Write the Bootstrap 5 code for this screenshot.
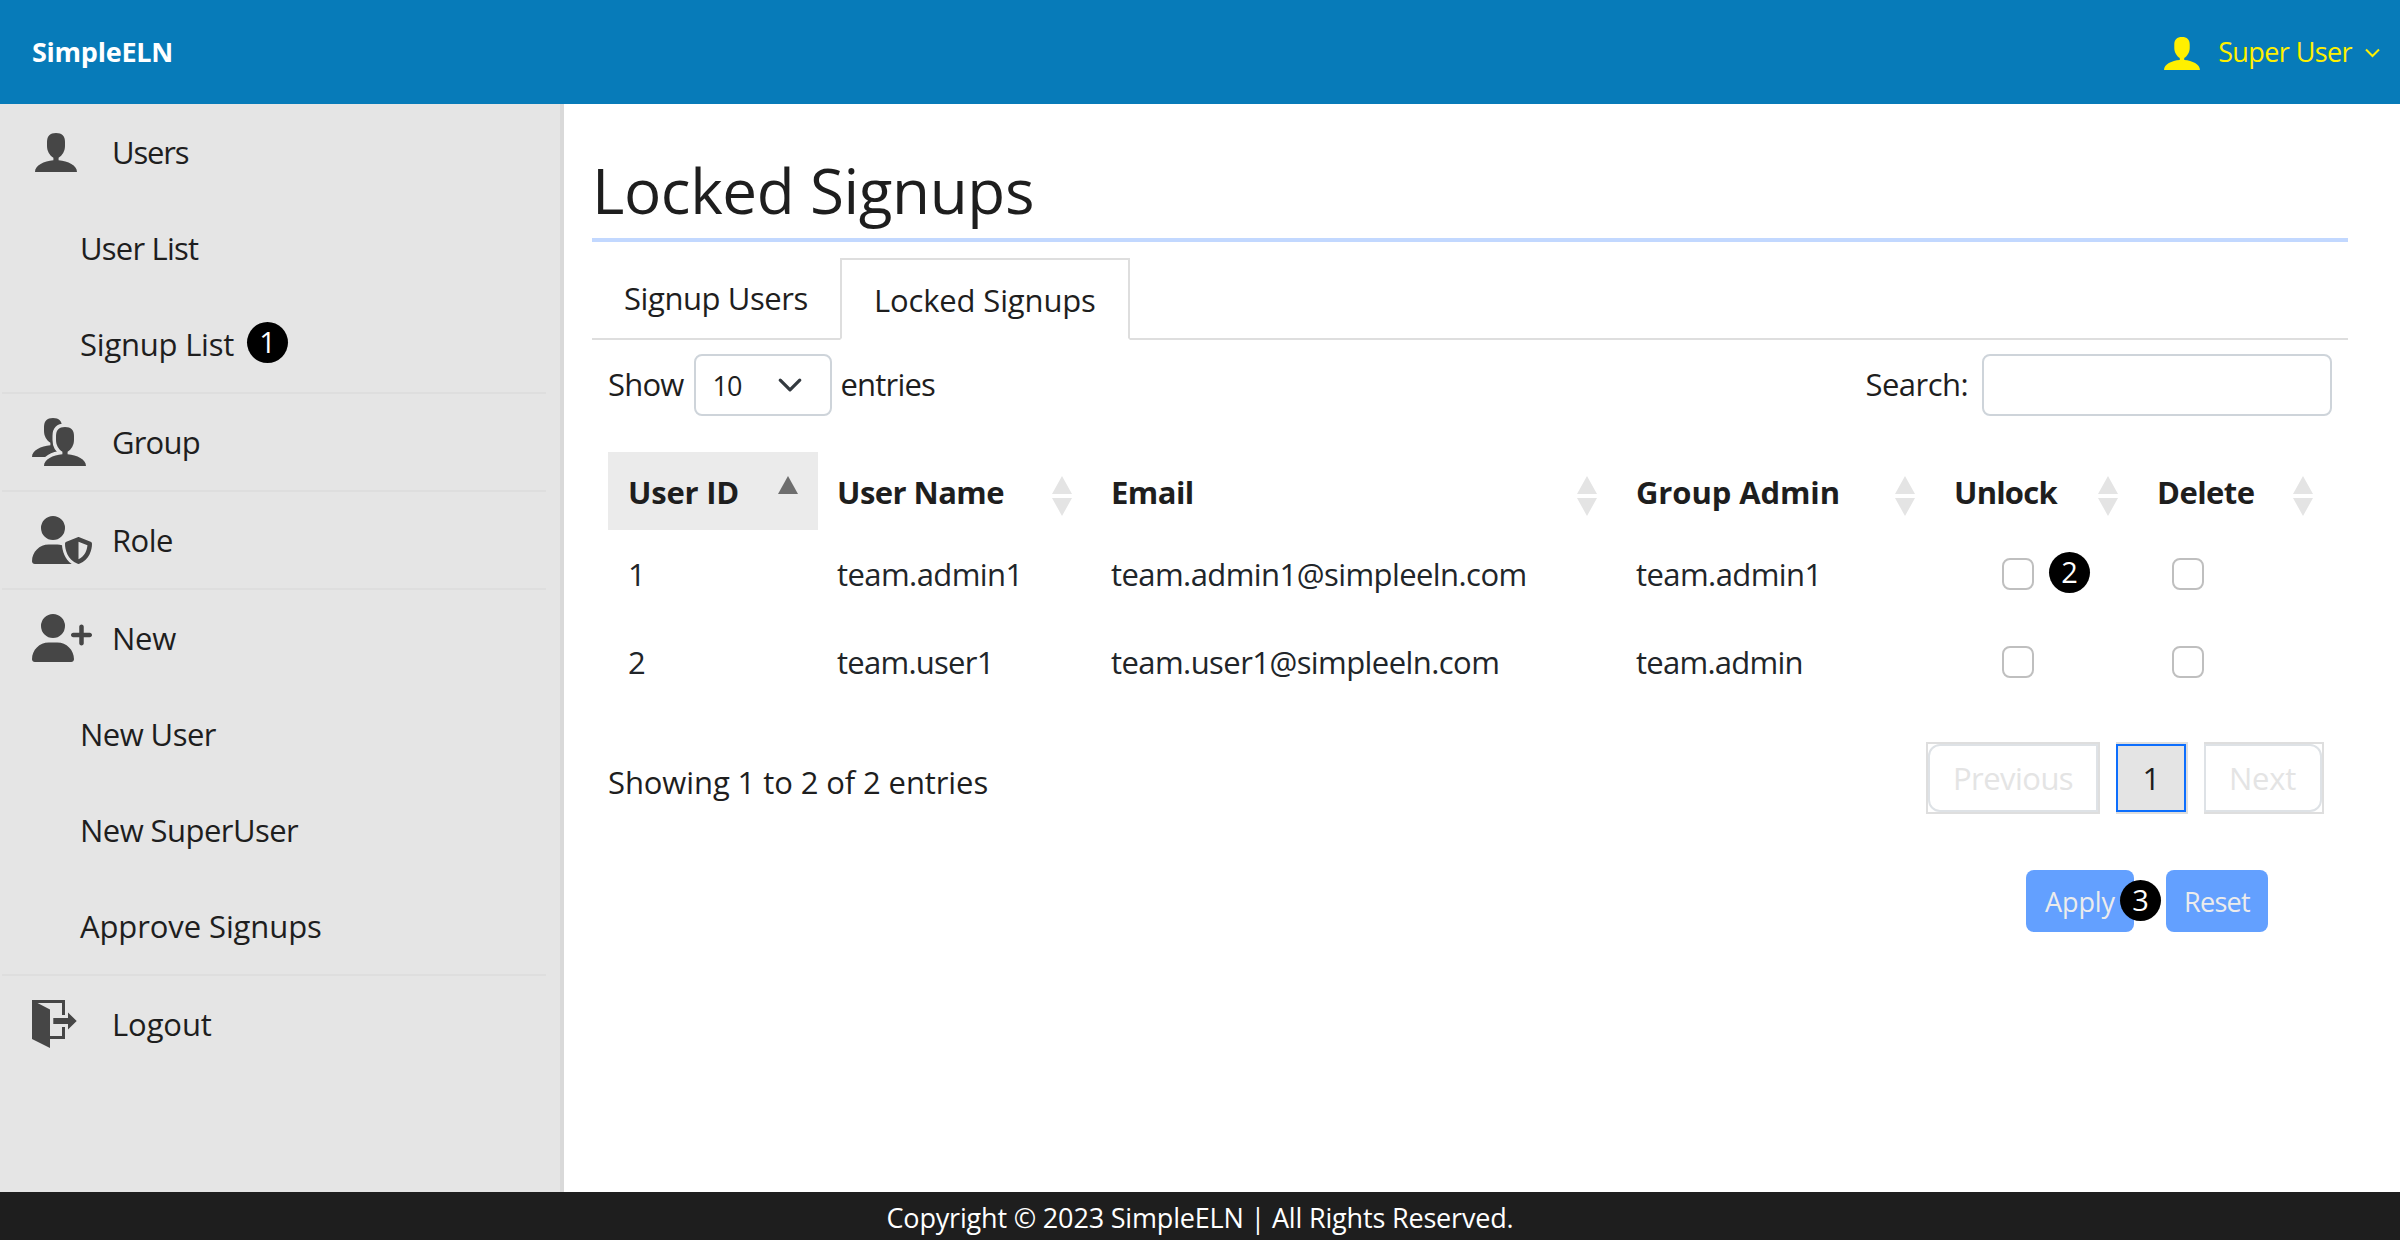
<!DOCTYPE html>
<html lang="en">
<head>
<meta charset="utf-8">
<meta name="viewport" content="width=device-width, initial-scale=1">
<title>SimpleELN - Locked Signups</title>
<link href="https://cdn.jsdelivr.net/npm/bootstrap@5.3.0/dist/css/bootstrap.min.css" rel="stylesheet">
<script src="https://cdn.jsdelivr.net/npm/bootstrap@5.3.0/dist/js/bootstrap.bundle.min.js" defer></script>
<style>
  body { font-family: "Open Sans", "Noto Sans", sans-serif; font-size: 31px; line-height: 48px; color: #1e1e1e; letter-spacing: -.55px; background: #fff; height: 1240px; overflow: hidden; }
  .ls-0 { letter-spacing: -.1px; }
  .ls-1 { letter-spacing: -.22px; }
  .ls-3 { letter-spacing: -.8px; }
  .ls-4 { letter-spacing: -1.2px; }

  .topbar { height: 104px; padding: 0 20px 1px 32px; background: #077bb9; }
  .topbar .navbar-brand { color: #fff; font-size: 27px; font-weight: 700; padding: 0; margin: 0; letter-spacing: -.25px; }
  .user-menu { color: #fff000; font-size: 27px; letter-spacing: -.6px; text-decoration: none; }
  .user-menu .avatar { margin: 4px 18px 0 0; }
  .user-menu .caret { margin: 3px 0 0 13px; }

  .sidebar { width: 564px; height: 1088px; background: #e5e5e5; border-right: 4px solid #d9d9d9; }
  .menu-group { margin: 0 14px 0 2px; }
  .menu-group + .menu-group { border-top: 2px solid #dedede; }
  .menu-item { height: 96px; color: #1e1e1e; text-decoration: none; padding-left: 30px; }
  .menu-item.sub { padding-left: 78px; }
  .menu-icon { width: 80px; height: 48px; color: #464646; flex: none; }
  .menu-icon svg { display: block; }

  .step { width: 41px; height: 41px; border-radius: 50%; background: #000; color: #fff; font-size: 29px; font-weight: 500; line-height: 40px; text-align: center; letter-spacing: 0; }
  .step-menu { margin: -4px 0 0 13px; }

  .content { min-width: 0; padding: 48px 52px 0 28px; }
  .page-title { font-size: 62px; line-height: 76px; font-weight: 400; letter-spacing: -.4px; margin: 0 0 16px; padding-bottom: 10px; border-bottom: 4px solid #c2d8ff; }

  .nav-tabs { --bs-nav-tabs-border-width: 2px; --bs-nav-tabs-border-color: #dedede; --bs-nav-tabs-border-radius: 0; height: 82px; }
  .nav-tabs .nav-link, .nav-tabs .nav-link.active { color: #1e1e1e; height: 82px; padding: 14px 30px 16px; width: 248px; white-space: nowrap; letter-spacing: -.42px; }
  .nav-tabs .nav-link.active { width: 290px; padding: 16px 32px 14px; border-color: #dedede #dedede #fff; letter-spacing: -.15px; }

  .panel { padding: 14px 16px 0; }
  .panel label > span { margin-top: -2px; }
  .form-select.page-size { width: 138px; height: 62px; border: 2px solid #ced4da; border-radius: 8px; font-size: 27px; line-height: 1; letter-spacing: -1px; padding: 0 0 0 16px; margin: 0 8px 0 11px; color: #1e1e1e; background-size: 26px 26px; background-position: right 27px center; }
  .form-control.search { width: 350px; height: 62px; border: 2px solid #ced4da; border-radius: 8px; margin-left: 14px; }

  .signups { width: 1725px; table-layout: fixed; margin: 36px 0 0; --bs-table-bg: transparent; }
  .signups th { height: 78px; padding: 2px 20px 0 19px; border: 0; vertical-align: middle; color: #1e1e1e; white-space: nowrap; }
  .signups th:first-child, .signups td:first-child { padding-left: 20px; }
  .signups th.sorted { background: #ebebeb; }
  .signups th svg { margin-top: 8px; }
  .signups td { height: 88px; padding: 0 20px 0 19px; border: 0; vertical-align: middle; color: #212529; letter-spacing: -.57px; }
  .signups .team { letter-spacing: -.75px; }
  .signups .form-check-input { width: 32px; height: 32px; border: 2px solid #bfbfbf; border-radius: 8px; margin: 0; flex: none; display: block; }
  .signups td.unlock { padding-left: 67px; }
  .signups td.delete { padding-left: 34px; }
  .step-check { position: absolute; left: 47px; top: -6px; }

  .table-foot { margin-top: 36px; }
  .pager { gap: 16px; margin: 0 8px 0 0; }
  .pager .page-item { border: 2px solid #dedede; height: 72px; }
  .pager .page-item .page-link { height: 68px; border: 2px solid #dee2e6; padding: 8px 0 8px 23px; font-size: 31px; line-height: 48px; color: #e4e4e4; background: #fff; margin: 0; }
  .pager .page-item:first-child .page-link { border-radius: 12px 0 0 12px; }
  .pager .page-item:last-child .page-link { border-radius: 0 12px 12px 0; }
  .pager .page-item:not(:first-child) { border-left: 0; }
  .pager .page-item.active .page-link { background: #e4e4e4; border-color: #0d6efd; color: #1e1e1e; padding: 8px 0; text-align: center; }
  .prev { width: 174px; } .cur { width: 72px; } .next { width: 120px; }

  .actions { margin: 56px 64px 0 0; gap: 32px; }
  .actions .btn { height: 62px; padding: 0; border: 0; border-radius: 8px; background: #63a0ff; color: #ececec; font-size: 27px; line-height: 63px; letter-spacing: -.1px; }
  .apply { width: 108px; } .reset { width: 102px; }
  .actions .btn.reset { letter-spacing: -.7px; }
  .step-apply { position: absolute; left: 94px; top: 10px; }

  .page-footer { height: 48px; background: #1e1e1e; color: #fff; font-size: 27px; letter-spacing: -.18px; line-height: 48px; padding-top: 2px; text-align: center; }
</style>
</head>
<body>
<svg width="0" height="0" class="position-absolute" aria-hidden="true">
  <defs>
    <path id="person" d="M21 0C27 0 30 3 30 9v4c0 5-2.700 9.500-6.400 11.800V27.300C33 28 42 32.500 42 39H0C0 32.500 9 28 18.400 27.300V24.800C14.700 22.500 12 18 12 13V9C12 3 15 0 21 0z"/>
    <symbol id="sort" viewBox="0 0 20 40"><path d="M10 0l10 18H0zM0 22h20L10 40z" fill="#e4e4e4"/></symbol>
  </defs>
</svg>

<nav class="navbar topbar d-flex justify-content-between align-items-center flex-nowrap">
  <a class="navbar-brand" href="#">SimpleELN</a>
  <a class="user-menu d-flex align-items-center" href="#">
    <svg class="avatar" width="36" height="33" viewBox="0 0 42 39" preserveAspectRatio="none" fill="currentColor"><use href="#person"/></svg>
    <span>Super User</span>
    <svg class="caret" width="15" height="10" viewBox="0 0 15 10" fill="none" stroke="currentColor" stroke-width="2"><path d="M1 1.500l6.500 6.500L14 1.500"/></svg>
  </a>
</nav>

<div class="d-flex">
  <aside class="sidebar flex-shrink-0">
    <div class="menu-group">
      <a class="menu-item d-flex align-items-center" href="#"><span class="menu-icon"><svg width="60" height="48" fill="currentColor"><use href="#person" x="3" y="5"/></svg></span><span class="ls-4">Users</span></a>
      <a class="menu-item sub d-flex align-items-center" href="#"><span class="ls-3">User List</span></a>
      <a class="menu-item sub d-flex align-items-center" href="#"><span class="ls-1">Signup List</span><span class="step step-menu">1</span></a>
    </div>
    <div class="menu-group">
      <a class="menu-item d-flex align-items-center" href="#"><span class="menu-icon"><svg width="60" height="48" fill="currentColor"><use href="#person"/><use href="#person" x="12" y="9" stroke="#e5e5e5" stroke-width="7"/><use href="#person" x="12" y="9"/></svg></span><span class="ls-3">Group</span></a>
    </div>
    <div class="menu-group">
      <a class="menu-item d-flex align-items-center" href="#"><span class="menu-icon"><svg width="60" height="48" viewBox="0 0 640 512" fill="currentColor"><path d="M224 256A128 128 0 1 0 224 0a128 128 0 1 0 0 256zm-45.700 48C79.800 304 0 383.800 0 482.300C0 498.700 13.300 512 29.700 512H418.300c1.800 0 3.500-.2 5.300-.5c-76.300-55.100-99.800-141-103.100-200.200c-16.100-4.800-33.100-7.300-50.700-7.300H178.300zm308.800-78.300l-120 48C358 277.400 352 286.200 352 296c0 63.300 25.900 168.800 134.800 214.200c5.900 2.500 12.600 2.500 18.500 0C614.100 464.800 640 359.300 640 296c0-9.800-6-18.600-15.100-22.300l-120-48c-5.700-2.300-12.100-2.300-17.800 0zM591.400 312c-3.900 50.700-27.200 116.700-95.400 149.700V273.800L591.400 312z"/></svg></span><span>Role</span></a>
    </div>
    <div class="menu-group">
      <a class="menu-item d-flex align-items-center" href="#"><span class="menu-icon"><svg width="60" height="48" viewBox="0 0 640 512" fill="currentColor"><path d="M96 128a128 128 0 1 1 256 0A128 128 0 1 1 96 128zM0 482.300C0 383.800 79.800 304 178.300 304h91.400C368.200 304 448 383.800 448 482.300c0 16.400-13.300 29.700-29.700 29.700H29.700C13.300 512 0 498.700 0 482.300zM504 312V248H440c-13.300 0-24-10.700-24-24s10.700-24 24-24h64V136c0-13.300 10.700-24 24-24s24 10.700 24 24v64h64c13.300 0 24 10.700 24 24s-10.700 24-24 24H552v64c0 13.300-10.700 24-24 24s-24-10.700-24-24z"/></svg></span><span class="ls-1">New</span></a>
      <a class="menu-item sub d-flex align-items-center" href="#"><span>New User</span></a>
      <a class="menu-item sub d-flex align-items-center" href="#"><span>New SuperUser</span></a>
      <a class="menu-item sub d-flex align-items-center" href="#"><span class="ls-0">Approve Signups</span></a>
    </div>
    <div class="menu-group">
      <a class="menu-item d-flex align-items-center" href="#"><span class="menu-icon"><svg width="60" height="48" fill="currentColor"><path d="M0 0H33V15H30V3H5.500L18 9.500V36H30V27H33V39H18V48L0 39zM21.300 18H36V12.500L44.700 21L36 29.500V24H21.300z"/></svg></span><span class="ls-0">Logout</span></a>
    </div>
  </aside>

  <main class="content flex-grow-1">
    <h1 class="page-title">Locked Signups</h1>
    <ul class="nav nav-tabs">
      <li class="nav-item"><a class="nav-link" href="#">Signup Users</a></li>
      <li class="nav-item"><a class="nav-link active" href="#">Locked Signups</a></li>
    </ul>

    <div class="panel">
      <div class="d-flex justify-content-between align-items-center">
        <label class="d-flex align-items-center"><span class="ls-3">Show</span>
          <select class="form-select page-size"><option>10</option></select>
          <span class="ls-3">entries</span></label>
        <label class="d-flex align-items-center"><span>Search:</span><input type="search" class="form-control search"></label>
      </div>

      <table class="table signups">
        <colgroup><col style="width:210px"><col style="width:274px"><col style="width:525px"><col style="width:318px"><col style="width:203px"><col style="width:195px"></colgroup>
        <thead>
          <tr>
            <th class="sorted"><div class="d-flex justify-content-between align-items-center"><span class="ls-1">User ID</span><svg width="20" height="40"><path d="M10 0l10 18H0z" fill="#6e6e6e"/></svg></div></th>
            <th><div class="d-flex justify-content-between align-items-center"><span>User Name</span><svg width="20" height="40"><use href="#sort"/></svg></div></th>
            <th><div class="d-flex justify-content-between align-items-center"><span>Email</span><svg width="20" height="40"><use href="#sort"/></svg></div></th>
            <th><div class="d-flex justify-content-between align-items-center"><span class="ls-0">Group Admin</span><svg width="20" height="40"><use href="#sort"/></svg></div></th>
            <th><div class="d-flex justify-content-between align-items-center"><span class="ls-3">Unlock</span><svg width="20" height="40"><use href="#sort"/></svg></div></th>
            <th><div class="d-flex justify-content-between align-items-center"><span>Delete</span><svg width="20" height="40"><use href="#sort"/></svg></div></th>
          </tr>
        </thead>
        <tbody>
          <tr>
            <td>1</td><td>team.admin1</td><td>team.admin1@simpleeln.com</td><td>team.admin1</td>
            <td class="unlock"><div class="position-relative"><input class="form-check-input" type="checkbox"><span class="step step-check">2</span></div></td>
            <td class="delete"><input class="form-check-input" type="checkbox"></td>
          </tr>
          <tr>
            <td>2</td><td class="team">team.user1</td><td>team.user1@simpleeln.com</td><td class="team">team.admin</td>
            <td class="unlock"><input class="form-check-input" type="checkbox"></td>
            <td class="delete"><input class="form-check-input" type="checkbox"></td>
          </tr>
        </tbody>
      </table>

      <div class="table-foot d-flex justify-content-between">
        <div class="ls-0 pt-3">Showing 1 to 2 of 2 entries</div>
        <ul class="pagination pager">
          <li class="page-item disabled prev"><a class="page-link" href="#">Previous</a></li>
          <li class="page-item active cur"><a class="page-link" href="#">1</a></li>
          <li class="page-item disabled next"><a class="page-link ls-1" href="#">Next</a></li>
        </ul>
      </div>

      <div class="actions d-flex justify-content-end">
        <div class="position-relative">
          <button class="btn apply" type="button">Apply</button>
          <span class="step step-apply">3</span>
        </div>
        <button class="btn reset" type="button">Reset</button>
      </div>
    </div>
  </main>
</div>

<footer class="page-footer">Copyright © 2023 SimpleELN | All Rights Reserved.</footer>
</body>
</html>
